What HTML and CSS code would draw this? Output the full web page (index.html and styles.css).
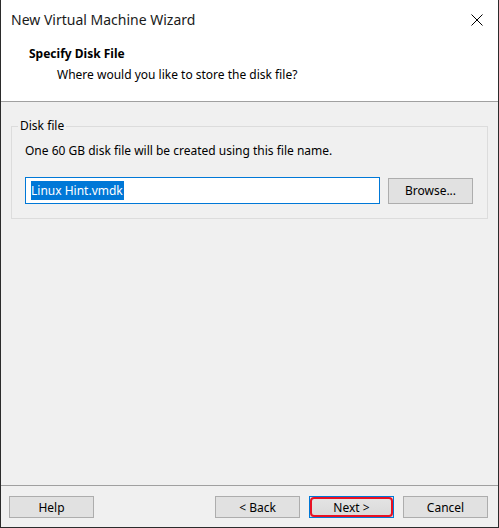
FILE: index.html
```html
<!DOCTYPE html>
<html lang="en">
<head>
  <meta charset="UTF-8" />
  <title>New Virtual Machine Wizard</title>
  <link rel="stylesheet" href="styles.css">
</head>
<body>
  <div class="ventana">
    <div class="barra-titulo">
      <span class="titulo">New Virtual Machine Wizard</span>
      <svg class="cerrar" width="12" height="12" viewBox="0 0 12 12">
        <path d="M0.5 0.5 L11.5 11.5 M11.5 0.5 L0.5 11.5" stroke="#000" stroke-width="1" fill="none"/>
      </svg>
    </div>

    <div class="cabecera">
      <h1>Specify Disk File</h1>
      <p>Where would you like to store the disk file?</p>
    </div>

    <div class="contenido">
      <fieldset class="grupo">
        <legend>Disk file</legend>
        <p>One 60 GB disk file will be created using this file name.</p>
        <div class="fila">
          <div class="campo"><span class="seleccion">Linux Hint.vmdk</span></div>
          <button class="boton">Browse...</button>
        </div>
      </fieldset>
    </div>

    <div class="pie">
      <button class="boton">Help</button>
      <div class="navegacion">
        <button class="boton">&lt; Back</button>
        <button class="boton defecto">Next &gt;</button>
        <button class="boton">Cancel</button>
      </div>
    </div>
  </div>
</body>
</html>
```

FILE: styles.css
```css
* {
  box-sizing: border-box;
}

body {
  margin: 0;
  font-family: "Noto Sans", "Open Sans", sans-serif;
  font-size: 12px;
  color: #000;
}

.ventana {
  width: 499px;
  height: 528px;
  display: flex;
  flex-direction: column;
  background-color: #f0f0f0;
  border-left: 1px solid #2b2b2b;
  border-right: 1px solid #2b2b2b;
  border-bottom: 1px solid #2b2b2b;
}

.barra-titulo {
  height: 40px;
  background-color: #fff;
  display: flex;
  align-items: center;
  justify-content: space-between;
  padding: 0 15px 0 10px;
}

.titulo {
  font-size: 14px;
  color: #1a1a1a;
  margin-top: -1px;
}

.cerrar {
  display: block;
  margin-top: -1px;
}

.cabecera {
  height: 62px;
  background-color: #fff;
  border-bottom: 1px solid #a0a0a0;
  padding: 6px 0 0 28px;
}

.cabecera h1 {
  margin: 0;
  font-size: 12px;
  font-weight: bold;
  line-height: 16px;
}

.cabecera p {
  margin: 5px 0 0 28px;
  line-height: 16px;
}

.contenido {
  flex: 1;
  padding: 16px 10px 0 10px;
}

.grupo {
  margin: 0;
  height: 101px;
  border: 1px solid #dcdcdc;
  padding: 3px 7px 0 13px;
}

.grupo legend {
  padding: 0 2px;
  margin-left: -7px;
  line-height: 16px;
}

.grupo p {
  margin: 6px 0 0 0;
  line-height: 16px;
}

.fila {
  display: flex;
  align-items: center;
  gap: 8px;
  margin-top: 18px;
}

.campo {
  width: 355px;
  height: 27px;
  background-color: #fff;
  border: 1px solid #0078d7;
  padding: 3px 5px;
  display: flex;
  align-items: center;
}

.seleccion {
  background-color: #0078d7;
  color: #fff;
  line-height: 19px;
  padding-right: 1px;
}

.boton {
  width: 85px;
  height: 22px;
  background-color: #e1e1e1;
  border: 1px solid #adadad;
  font-family: inherit;
  font-size: 12px;
  color: #000;
  padding: 0;
  position: relative;
}

.fila .boton {
  height: 26px;
}

.pie {
  height: 42px;
  border-top: 1px solid #a0a0a0;
  display: flex;
  justify-content: space-between;
  padding: 10px 10px 0 8px;
}

.navegacion {
  display: flex;
  gap: 9px;
}

.defecto {
  border-color: #0078d7;
  background: linear-gradient(#e5e5e5, #d9d9d9);
}

/* marca roja sobre el botón por defecto */
.defecto::after {
  content: "";
  position: absolute;
  top: 0;
  left: 0;
  right: 0;
  bottom: 0;
  border: 2px solid #e81123;
  border-radius: 4px;
}
```
